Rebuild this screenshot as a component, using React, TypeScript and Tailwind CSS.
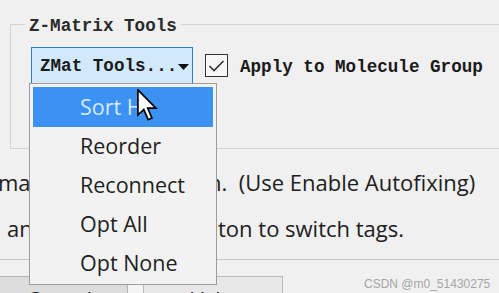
import React from "react";

const mono = { fontFamily: '"Liberation Mono", "Courier New", monospace' } as const;

function Cursor() {
  return (
    <svg width="22" height="32" viewBox="0 0 13 19" className="absolute left-[137px] top-[89px]">
      <path
        d="M0.5 0.5 L0.5 15.5 L4 12.2 L6.6 18.2 L8.8 17.2 L6.3 11.4 L11.2 11.4 Z"
        fill="#ffffff"
        stroke="#000000"
        strokeWidth="1"
        strokeLinejoin="miter"
      />
    </svg>
  );
}

export default function App() {
  const items = ["Reorder", "Reconnect", "Opt All", "Opt None"];
  return (
    <div
      className="relative w-[499px] h-[293px] overflow-hidden bg-[#f0f0f0] text-[#1e1e1e] flex flex-col"
      style={{ fontFamily: '"Open Sans", "Noto Sans", sans-serif' }}
    >
      <fieldset className="ml-[10px] mt-[12px] w-[520px] h-[137px] shrink-0 border border-[#d3d3d3]">
        <legend className="ml-[14px] px-[4px] text-[17.6px] leading-[24px] text-[#2a2a2a] font-bold" style={mono}>
          <span className="inline-block translate-y-[2px]">Z-Matrix Tools</span>
        </legend>
        <div className="mt-[11px] ml-[20px] flex items-center">
          <div
            className="w-[162px] h-[37px] border border-[#2a7fd4] bg-[#d2e8fb] flex items-center pl-[8px] text-[17.6px] text-[#1a1a1a] font-bold"
            style={mono}
          >
            <span className="translate-y-[1px]">ZMat Tools...</span>
            <svg width="11" height="6" viewBox="0 0 11 6" className="ml-[1px] mt-[2px]">
              <path d="M0 0 L11 0 L5.5 6 Z" fill="#111" />
            </svg>
          </div>
          <div className="ml-[12px] w-[23px] h-[23px] border border-[#333] bg-[#f7f7f7] flex items-center justify-center">
            <svg width="17" height="14" viewBox="0 0 17 14">
              <path d="M1.5 7 L6 11.5 L15.5 2" fill="none" stroke="#333" strokeWidth="1.6" />
            </svg>
          </div>
          <span className="ml-[12px] text-[17.6px] text-[#1a1a1a] font-bold translate-y-[2px]" style={mono}>
            Apply to Molecule Group
          </span>
        </div>
      </fieldset>

      <div className="mt-[10px] text-[22px] leading-[46px] text-[#202020]">
        <div className="flex whitespace-nowrap">
          <span className="w-[210px] shrink-0 overflow-hidden -ml-[2px]">mat the Z-matrix in</span>
          <span>n.&nbsp;&nbsp;(Use Enable Autofixing)</span>
        </div>
        <div className="flex whitespace-nowrap">
          <span className="w-[218px] shrink-0 overflow-hidden pl-[7px]">an the toggle but</span>
          <span>ton to switch tags.</span>
        </div>
      </div>

      <div className="mt-[8px] border-t border-[#c8c8c8] shrink-0" />

      <div className="mt-[16px] flex items-start h-[40px] text-[21px] shrink-0">
        <div className="w-[128px] h-full shrink-0 border-t border-r border-[#b5b5b5] bg-[#dcdcdc] pl-[27px] pt-[11px] leading-[24px]">
          Cancel
        </div>
        <div className="w-[15px] h-full shrink-0 border-t border-[#c0c0c0] bg-[#f4f4f4]" />
        <div className="w-[140px] h-full shrink-0 border border-[#b9b9b9] bg-[#e8e8e8] pl-[47px] pt-[11px] leading-[24px]">
          Values
        </div>
        <div
          className="ml-[81px] mt-[1px] shrink-0 whitespace-nowrap text-[12px] text-[#a6a6a6] leading-[14px]"
          style={{ fontFamily: '"Liberation Sans", Arial, sans-serif' }}
        >
          CSDN @m0_51430275
        </div>
      </div>

      <div className="absolute left-[29px] top-[83px] w-[188px] h-[202px] border border-[#9d9d9d] bg-[#f2f2f2] p-[3px] text-[21.5px]">
        <div className="h-[40px] bg-[#3b92f2] text-[#d6eaff] flex items-center pl-[47px]">Sort H</div>
        {items.map((t) => (
          <div key={t} className="h-[39px] flex items-center pl-[47px] text-[#1f1f1f]">
            {t}
          </div>
        ))}
      </div>
      <Cursor />
    </div>
  );
}
